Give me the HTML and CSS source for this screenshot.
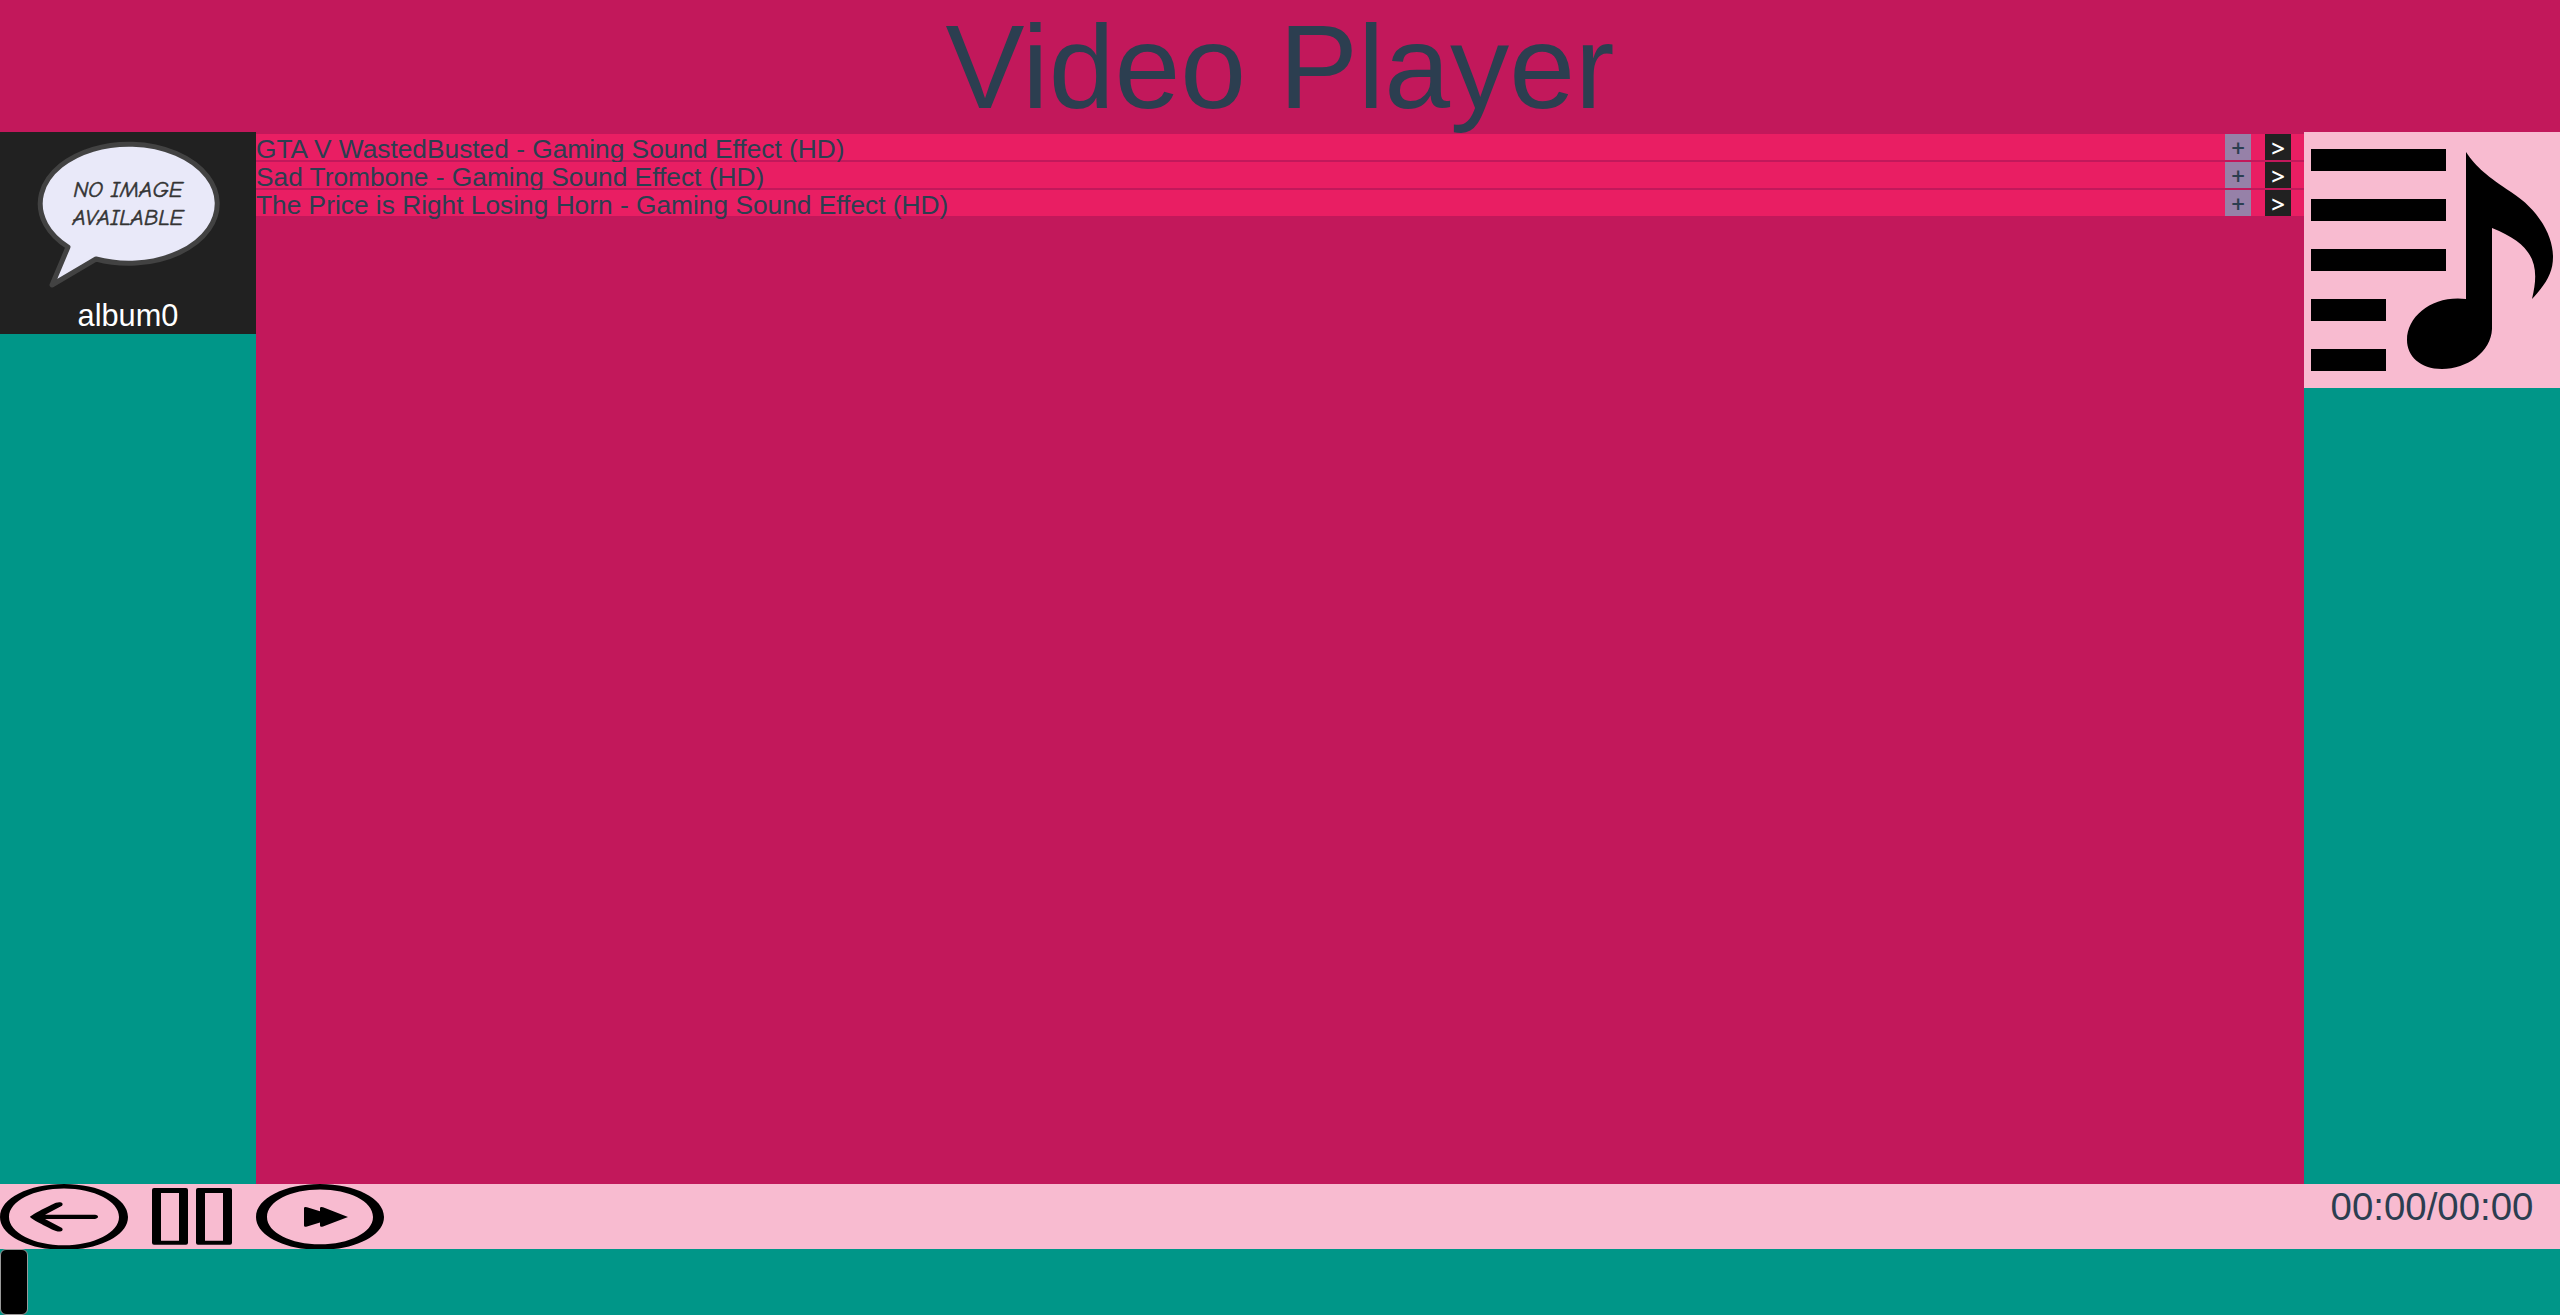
FILE: index.html
```html
<!DOCTYPE html>
<html lang="en">
<head>
<meta charset="utf-8">
<title>Video Player</title>
<link rel="stylesheet" href="styles.css">
</head>
<body>
<div class="app">
  <header class="header"><h1 class="title">Video Player</h1></header>
  <div class="main">
    <nav class="side">
      <button class="album" type="button">
        <svg class="album-art" viewBox="0 0 256 165" aria-hidden="true">
          <path d="M68 115A88.500 59.500 0 1 1 96 127L52 153Z" fill="#e9e9f9" stroke="#424242" stroke-width="5" stroke-linejoin="round"/>
          <g class="art-text"><text x="128" y="65" text-anchor="middle">NO IMAGE</text><text x="128" y="93" text-anchor="middle">AVAILABLE</text></g>
        </svg>
        <span class="album-name">album0</span>
      </button>
    </nav>
    <ul class="tracks">
      <li class="track"><span class="track-name">GTA V WastedBusted - Gaming Sound Effect (HD)</span><button class="add" type="button" aria-label="Add to playlist">+</button><button class="play" type="button" aria-label="Play">&gt;</button></li>
      <li class="track"><span class="track-name">Sad Trombone - Gaming Sound Effect (HD)</span><button class="add" type="button" aria-label="Add to playlist">+</button><button class="play" type="button" aria-label="Play">&gt;</button></li>
      <li class="track"><span class="track-name">The Price is Right Losing Horn - Gaming Sound Effect (HD)</span><button class="add" type="button" aria-label="Add to playlist">+</button><button class="play" type="button" aria-label="Play">&gt;</button></li>
    </ul>
    <aside class="side">
      <button class="playlist" type="button" aria-label="Playlist">
        <svg class="playlist-icon" viewBox="0 0 256 256" aria-hidden="true">
          <path d="M7 17h135v22H7zM7 67h135v22H7zM7 117h135v22H7zM7 167h75v22H7zM7 217h75v22H7z"/>
          <path d="M162 20C172 35 184 45 207 60C235 78 249 104 249 125C249 141 242 152 228 167C237 131 228 112 188 96V197C187 220 163 237 138 237C116 237 103 224 103 208C103 183 130 163 162 167Z"/>
        </svg>
      </button>
    </aside>
  </div>
  <div class="controls">
    <div class="buttons">
      <button class="control" type="button" aria-label="Previous">
        <svg class="control-icon" viewBox="0 0 128 65" preserveAspectRatio="none" aria-hidden="true">
          <path fill-rule="evenodd" d="M64 0C99 0 128 14 128 32.500S99 65 64 65S0 51 0 32.500S29 0 64 0ZM64 4.500C34 4.500 9 17 9 32.500S34 60.500 64 60.500S119 48 119 32.500S94 4.500 64 4.500Z"/>
          <path d="M30 32.500C32 30 50 21 56 18.500C61 17 64 19 62 21.500L45 30.500H95C99 31 99 34 95 34.500H45L62 43.500C64 46 61 48 56 46.500C50 44 32 35 30 32.500Z"/>
        </svg>
      </button>
      <button class="control" type="button" aria-label="Pause">
        <svg class="control-icon" viewBox="0 0 128 65" preserveAspectRatio="none" aria-hidden="true">
          <path fill-rule="evenodd" d="M26 4H58Q60 4 60 6V58Q60 60 58 60H26Q24 60 24 58V6Q24 4 26 4ZM33 9V56H51V9ZM70 4H102Q104 4 104 6V58Q104 60 102 60H70Q68 60 68 58V6Q68 4 70 4ZM77 9V56H95V9Z"/>
        </svg>
      </button>
      <button class="control" type="button" aria-label="Next">
        <svg class="control-icon" viewBox="0 0 128 65" preserveAspectRatio="none" aria-hidden="true">
          <path fill-rule="evenodd" d="M64 0C99 0 128 14 128 32.500S99 65 64 65S0 51 0 32.500S29 0 64 0ZM64 5.500C35 5.500 11 17 11 32.500S35 59.500 64 59.500S117 48 117 32.500S93 5.500 64 5.500Z"/>
          <path d="M48 24Q48 22 51 23L64 27V24Q64 22 67 23L92 32.500L67 42Q64 43 64 41V38L51 42Q48 43 48 41Z"/>
        </svg>
      </button>
    </div>
    <div class="time">00:00/00:00</div>
  </div>
  <input class="seek" type="range" min="0" max="100" value="0" aria-label="Seek">
</div>
</body>
</html>
```
FILE: styles.css
```css
* { box-sizing: border-box; }
body {
  margin: 0;
  background: #c2185b;
  color: #2c3e50;
  font-family: "Liberation Sans", Arial, sans-serif;
}
button {
  border: 0;
  padding: 0;
  background: none;
  color: inherit;
  font: inherit;
  cursor: pointer;
}
svg { display: block; }
.app {
  display: grid;
  grid-template-rows: 10vh 80vh 5vh 5vh;
  height: 100vh;
  overflow: hidden;
}
.title {
  margin: 0;
  font-size: 9vh;
  font-weight: 400;
  line-height: 134px;
  text-align: center;
}
.main {
  display: grid;
  grid-template-columns: 10% 1fr 10%;
  min-height: 0;
}
.side { background: #009688; }
.album {
  display: block;
  width: 100%;
  background: #212121;
  color: #fff;
  font-size: 1.2vw;
  line-height: 37px;
}
.album-art { width: 100%; }
.art-text {
  fill: #333;
  stroke: #333;
  stroke-width: 0.5px;
  font-family: "Comic Neue", "Comic Sans MS", Lato, sans-serif;
  font-size: 23px;
  font-style: italic;
}
.album-name { display: block; }
.tracks {
  display: flex;
  flex-direction: column;
  gap: 2px;
  margin: 0;
  padding: 2px 0 0;
  list-style: none;
  font-size: 2vh;
  line-height: 30px;
}
.track {
  display: flex;
  gap: 14px;
  height: 26px;
  padding-right: 13px;
  background: #e91e63;
}
.track-name { flex: 1; }
.add, .play {
  width: 26px;
  height: 26px;
  font-family: "Open Sans", sans-serif;
  font-size: 24px;
  font-weight: 600;
  line-height: 28px;
}
.add { background: #9681a8; }
.play {
  background: #212121;
  color: #fff;
}
.playlist {
  display: block;
  width: 100%;
  background: #f8bbd0;
}
.playlist-icon { width: 100%; }
.controls {
  display: grid;
  grid-template-columns: 1fr 10%;
  min-height: 0;
  background: #f8bbd0;
}
.buttons { display: flex; }
.control { width: 5vw; height: 5vh; }
.control-icon { width: 100%; height: 100%; }
.time {
  font-size: 1.5vw;
  line-height: 45px;
  text-align: center;
}
.seek {
  appearance: none;
  width: 100%;
  height: 100%;
  margin: 0;
  background: #009688;
}
.seek::-webkit-slider-thumb {
  appearance: none;
  width: 28px;
  height: 5vh;
  border: 1px solid #999;
  border-radius: 6px;
  background: #000;
}
```
